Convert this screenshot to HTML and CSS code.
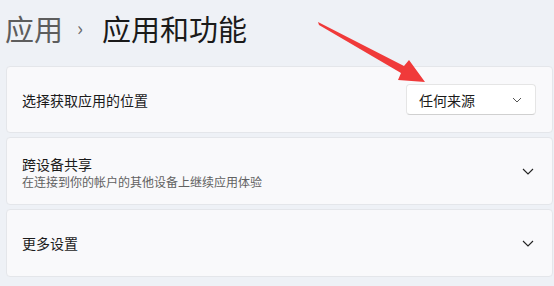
FILE: index.html
```html
<!DOCTYPE html>
<html lang="zh-CN">
<head>
<meta charset="utf-8">
<link rel="stylesheet" href="styles.css">
</head>
<body>
<div class="page">
  <header class="header">
    <span class="crumb">应用</span>
    <span class="sep">›</span>
    <span class="title">应用和功能</span>
  </header>
  <div class="cards">
    <div class="card card-first">
      <div class="label">选择获取应用的位置</div>
      <div class="dropdown">
        <span>任何来源</span>
        <svg class="dd-chev" width="10" height="6" viewBox="0 0 10 6"><path d="M1 1 L5 5 L9 1" fill="none" stroke="#555" stroke-width="1"/></svg>
      </div>
    </div>
    <div class="card">
      <div class="text">
        <div class="label">跨设备共享</div>
        <div class="sub">在连接到你的帐户的其他设备上继续应用体验</div>
      </div>
      <svg class="chev" width="12" height="7" viewBox="0 0 12 7"><path d="M1 1 L6 6 L11 1" fill="none" stroke="#222" stroke-width="1.1"/></svg>
    </div>
    <div class="card">
      <div class="label">更多设置</div>
      <svg class="chev" width="12" height="7" viewBox="0 0 12 7"><path d="M1 1 L6 6 L11 1" fill="none" stroke="#222" stroke-width="1.1"/></svg>
    </div>
  </div>
  <svg class="arrow" width="554" height="286" viewBox="0 0 554 286">
    <polygon points="318,22 404,66 409,60 425,82 398,80 401,73 319,25" fill="#f03a3a"/>
  </svg>
</div>
</body>
</html>
```
FILE: styles.css
```css
html, body {
  margin: 0;
  padding: 0;
}
body {
  background: #eef1f6;
  font-family: "Noto Sans CJK SC", "Microsoft YaHei", sans-serif;
  color: #1b1b1b;
  width: 554px;
  height: 286px;
  overflow: hidden;
}
.page {
  position: relative;
  padding: 0 1px 0 6px;
}
.header {
  height: 66px;
  display: flex;
  align-items: flex-start;
  padding-top: 8px;
  box-sizing: border-box;
  font-size: 29px;
  line-height: 40px;
}
.crumb {
  color: #5d5d5d;
  margin-left: -1px;
}
.sep {
  color: #6a6a6a;
  font-size: 20px;
  margin: 0 19px 0 14px;
  line-height: 40px;
}
.title {
  color: #1a1a1a;
}
.cards {
  display: flex;
  flex-direction: column;
  gap: 4px;
}
.card {
  height: 68px;
  box-sizing: border-box;
  background: #f9f9fb;
  border: 1px solid #e4e6ea;
  border-radius: 4px;
  display: flex;
  align-items: center;
  justify-content: space-between;
  padding: 0 16px 0 15px;
}
.card-first {
  height: 67px;
}
.label {
  font-size: 14px;
  line-height: 18px;
  color: #1b1b1b;
}
.sub {
  font-size: 12px;
  line-height: 16px;
  color: #616161;
  margin-top: 1px;
}
.text {
  margin-top: 2px;
}
.dropdown {
  width: 130px;
  height: 31px;
  box-sizing: border-box;
  background: #ffffff;
  border: 1px solid #e5e5e5;
  border-bottom-color: #d0d0d0;
  border-radius: 4px;
  display: flex;
  align-items: center;
  justify-content: space-between;
  padding: 0 13px 0 12px;
  font-size: 14px;
}
.dd-chev {
  display: block;
}
.chev {
  display: block;
  margin-right: 2px;
}
.arrow {
  position: absolute;
  left: 0;
  top: 0;
  pointer-events: none;
}
```
